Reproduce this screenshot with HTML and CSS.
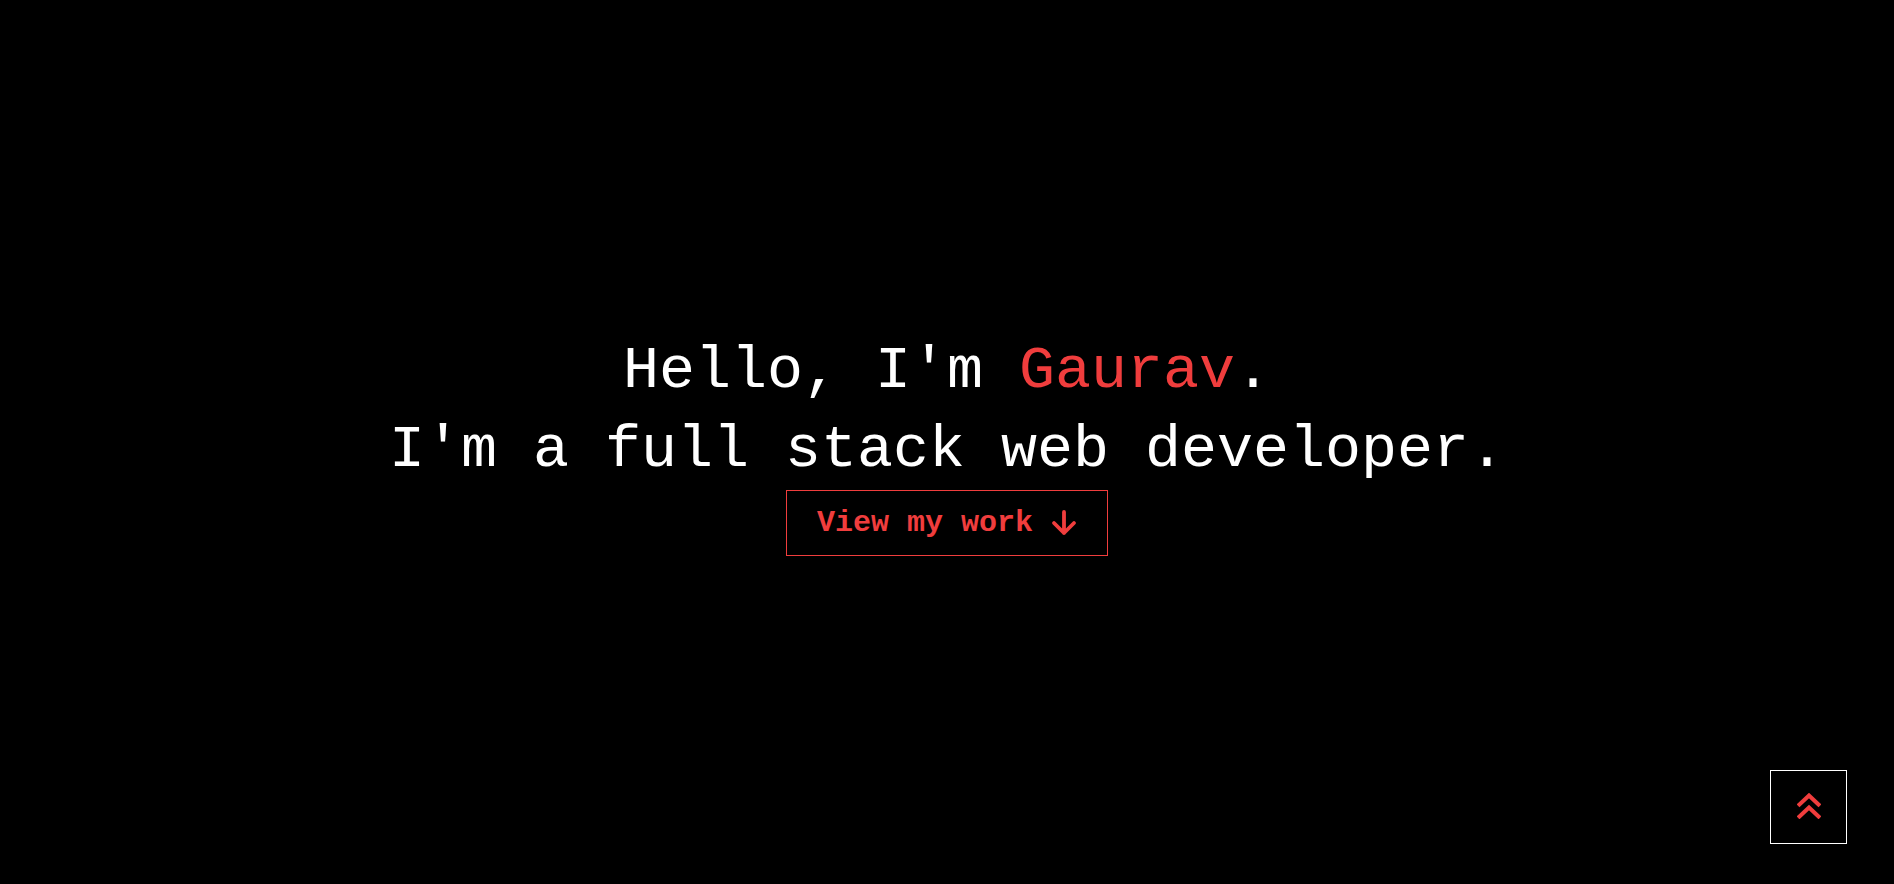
FILE: index.html
```html
<!DOCTYPE html>
<html lang="en">
<head>
<meta charset="utf-8">
<title>Gaurav</title>
<link rel="stylesheet" href="styles.css">
</head>
<body>
<section class="hero">
  <h1 class="title">Hello, I'm <span class="accent">Gaurav</span>.<br>I'm a full stack web developer.</h1>
  <a class="work-btn" href="#projects">View my work
    <svg class="arrow" viewBox="0 0 26 26" width="26" height="26" aria-hidden="true"><path d="M13 2 V23 M3 13 L13 23 L23 13" fill="none" stroke="currentColor" stroke-width="3.8" stroke-linecap="round" stroke-linejoin="round"/></svg>
  </a>
</section>
<a class="to-top" href="#" aria-label="Back to top">
  <svg viewBox="0 0 24 26" width="24" height="26" aria-hidden="true"><path d="M2.5 11.5 L12 2.5 L21.5 11.5 M2.5 23.5 L12 14.5 L21.5 23.5" fill="none" stroke="currentColor" stroke-width="4" stroke-linecap="square" stroke-linejoin="miter"/></svg>
</a>
</body>
</html>
```

FILE: styles.css
```css
html, body {
  margin: 0;
  padding: 0;
  background: #000;
}
body {
  font-family: "Liberation Mono", "Courier New", monospace;
  color: #fff;
}
.hero {
  height: 884px;
  box-sizing: border-box;
  padding-top: 4px;
  display: flex;
  flex-direction: column;
  align-items: center;
  justify-content: center;
}
.title {
  margin: 0;
  font-size: 60px;
  font-weight: normal;
  line-height: 79px;
  text-align: center;
  white-space: nowrap;
}
.accent {
  color: #f03d3d;
}
.work-btn {
  display: flex;
  align-items: center;
  gap: 18px;
  padding: 15px 30px;
  border: 1px solid #f03d3d;
  color: #f03d3d;
  font-size: 30px;
  font-weight: bold;
  line-height: 34px;
  text-decoration: none;
}
.arrow {
  display: block;
}
.to-top {
  position: fixed;
  right: 47px;
  bottom: 40px;
  width: 75px;
  height: 70px;
  border: 1px solid #fff;
  display: flex;
  align-items: center;
  justify-content: center;
  color: #f03d3d;
  padding-bottom: 2px;
  box-sizing: content-box;
}
.to-top svg {
  display: block;
}
```
